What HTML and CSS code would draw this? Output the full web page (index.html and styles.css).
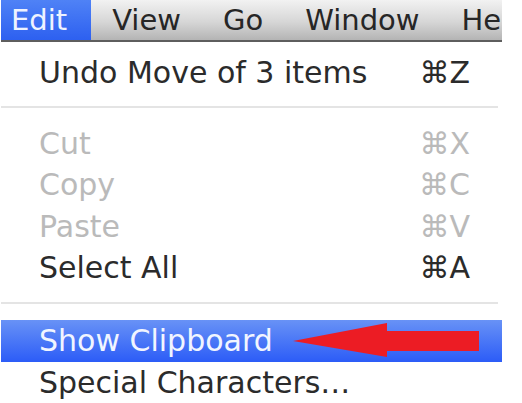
FILE: index.html
```html
<!DOCTYPE html>
<html lang="en">
<head>
  <meta charset="UTF-8" />
  <title>Edit menu</title>
  <link rel="stylesheet" href="styles.css">
</head>
<body>

  <div class="menubar">
    <span class="title active">Edit</span>
    <span class="title">View</span>
    <span class="title">Go</span>
    <span class="title">Window</span>
    <span class="title">Help</span>
  </div>

  <ul class="menu">
    <li class="item"><span>Undo Move of 3 items</span><span class="key">⌘Z</span></li>
    <li class="sep"></li>
    <li class="item disabled"><span>Cut</span><span class="key">⌘X</span></li>
    <li class="item disabled"><span>Copy</span><span class="key">⌘C</span></li>
    <li class="item disabled"><span>Paste</span><span class="key">⌘V</span></li>
    <li class="item"><span>Select All</span><span class="key">⌘A</span></li>
    <li class="sep wide"></li>
    <li class="item selected">
      <span>Show Clipboard</span>
      <svg class="arrow" width="186" height="34" viewBox="0 0 186 34">
        <polygon points="0,18 94,0 94,8 186,8 186,28 94,28 94,34" fill="#ec1c24"/>
      </svg>
    </li>
    <li class="item"><span>Special Characters…</span></li>
  </ul>

</body>
</html>
```

FILE: styles.css
```css
body {
  margin: 0;
  padding: 0 0 0 1px;
  background: #fff;
  font-family: 'DejaVu Sans', sans-serif;
  overflow: hidden;
}

.menubar {
  display: flex;
  width: 501px;
  height: 40px;
  overflow: hidden;
  white-space: nowrap;
  background: linear-gradient(to bottom, #f2f2f2, #d6d6d6 55%, #b4b4b4);
  border-bottom: 2px solid #5e5e5e;
}

.title {
  font-size: 29px;
  line-height: 40px;
  padding: 0 21px;
  color: #262626;
}

.title.active {
  padding: 0 24px 0 10px;
  color: #eef3ff;
  background: linear-gradient(to bottom, #4f82f6, #2d60f0);
}

.menu {
  list-style: none;
  margin: 0;
  padding: 10px 0 0;
  width: 501px;
}

.item {
  position: relative;
  display: flex;
  justify-content: space-between;
  height: 41.5px;
  padding: 0 32px 0 38px;
  font-size: 30px;
  line-height: 42px;
  color: #2b2b2b;
  white-space: nowrap;
}

.item.disabled {
  color: #bababa;
}

.item.selected {
  height: 42px;
  color: #f1f5ff;
  background: linear-gradient(to bottom, #6892f6, #2c5cf7);
}

.sep {
  height: 2px;
  margin: 12px 4px 15px 0;
  background: #e4e4e4;
}

.sep.wide {
  margin: 13px 4px 16px 0;
}

.arrow {
  position: absolute;
  left: 292px;
  top: 3px;
}
```
